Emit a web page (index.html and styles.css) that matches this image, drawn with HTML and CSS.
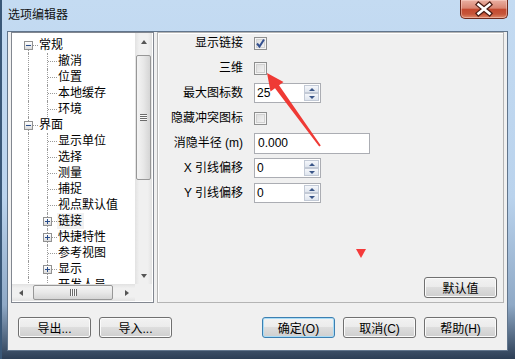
FILE: index.html
```html
<!DOCTYPE html>
<html>
<head>
  <title>选项编辑器</title>
  <link rel="stylesheet" href="styles.css">
</head>
<body>
  <div class="window">
    <div class="titlebar">
      <span class="title">选项编辑器</span>
      <div class="close">
        <svg width="46" height="18" viewBox="0 0 46 18">
          <path d="M17.5 4.5 L28.5 13.5 M28.5 4.5 L17.5 13.5" stroke="#4a1c14" stroke-width="5" stroke-linecap="square"/>
          <path d="M17.5 4.5 L28.5 13.5 M28.5 4.5 L17.5 13.5" stroke="#ffffff" stroke-width="2.6" stroke-linecap="square"/>
        </svg>
      </div>
    </div>

    <div class="client">
      <div class="panes">
        <div class="tree">
          <div class="tree-body">
            <div class="tree-list">
              <div class="node"><span class="cell top"><i class="box"></i></span><span class="label">常规</span></div>
              <div class="node"><span class="cell line"></span><span class="cell tee"></span><span class="label">撤消</span></div>
              <div class="node"><span class="cell line"></span><span class="cell tee"></span><span class="label">位置</span></div>
              <div class="node"><span class="cell line"></span><span class="cell tee"></span><span class="label">本地缓存</span></div>
              <div class="node"><span class="cell line"></span><span class="cell tee"></span><span class="label">环境</span></div>
              <div class="node"><span class="cell tee"><i class="box"></i></span><span class="label">界面</span></div>
              <div class="node"><span class="cell line"></span><span class="cell tee"></span><span class="label">显示单位</span></div>
              <div class="node"><span class="cell line"></span><span class="cell tee"></span><span class="label">选择</span></div>
              <div class="node"><span class="cell line"></span><span class="cell tee"></span><span class="label">测量</span></div>
              <div class="node"><span class="cell line"></span><span class="cell tee"></span><span class="label">捕捉</span></div>
              <div class="node"><span class="cell line"></span><span class="cell tee"></span><span class="label">视点默认值</span></div>
              <div class="node"><span class="cell line"></span><span class="cell tee"><i class="box plus"></i></span><span class="label hot">链接</span></div>
              <div class="node"><span class="cell line"></span><span class="cell tee"><i class="box plus"></i></span><span class="label">快捷特性</span></div>
              <div class="node"><span class="cell line"></span><span class="cell tee"></span><span class="label">参考视图</span></div>
              <div class="node"><span class="cell line"></span><span class="cell tee"><i class="box plus"></i></span><span class="label">显示</span></div>
              <div class="node"><span class="cell line"></span><span class="cell tee"></span><span class="label">开发人员</span></div>
            </div>
            <div class="vscroll">
              <div class="sb-btn"><i class="arr up"></i></div>
              <div class="vthumb"><i class="grip-h"></i></div>
              <div class="sb-track"></div>
              <div class="sb-btn"><i class="arr down"></i></div>
            </div>
          </div>
          <div class="tree-foot">
            <div class="hscroll">
              <div class="sb-btn"><i class="arr left"></i></div>
              <div class="hthumb"><i class="grip-v"></i></div>
              <div class="sb-track"></div>
              <div class="sb-btn"><i class="arr right"></i></div>
            </div>
            <div class="corner"></div>
          </div>
        </div>

        <div class="options">
          <div class="form">
            <label class="lbl">显示链接</label>
            <span class="check">
              <svg width="11" height="11" viewBox="0 0 11 11"><path d="M2 5.5 L4.5 8.5 L9 1.5" fill="none" stroke="#34508f" stroke-width="2"/></svg>
            </span>

            <label class="lbl">三维</label>
            <span class="check"></span>

            <label class="lbl">最大图标数</label>
            <div class="spin"><span class="spin-val">25</span><span class="spin-btns"><i class="sp up"></i><i class="sp down"></i></span></div>

            <label class="lbl">隐藏冲突图标</label>
            <span class="check"></span>

            <label class="lbl">消隐半径 (m)</label>
            <div class="field">0.000</div>

            <label class="lbl">X 引线偏移</label>
            <div class="spin"><span class="spin-val">0</span><span class="spin-btns"><i class="sp up"></i><i class="sp down"></i></span></div>

            <label class="lbl">Y 引线偏移</label>
            <div class="spin"><span class="spin-val">0</span><span class="spin-btns"><i class="sp up"></i><i class="sp down"></i></span></div>
          </div>
          <div class="options-foot">
            <button class="btn">默认值</button>
          </div>
        </div>
      </div>

      <div class="buttons">
        <div class="btn-group">
          <button class="btn">导出...</button>
          <button class="btn">导入...</button>
        </div>
        <div class="btn-group">
          <button class="btn default">确定(O)</button>
          <button class="btn">取消(C)</button>
          <button class="btn">帮助(H)</button>
        </div>
      </div>
    </div>

    <!-- red annotation marks drawn over the dialog -->
    <svg class="marks" width="515" height="359" viewBox="0 0 515 359">
      <polygon points="265,73 281.5,82.1 277,85.3 318.8,145.4 317.2,146.6 273,88.3 268.5,91.5" fill="#ef3a35"/>
      <polygon points="354,249 364,249 359,258" fill="#f53a3a"/>
    </svg>
  </div>
</body>
</html>
```

FILE: styles.css
```css
* {
  box-sizing: border-box;
}

body {
  margin: 0;
  width: 515px;
  height: 359px;
  overflow: hidden;
  background: #1d2b3c;
  font-family: "Liberation Sans", "Noto Sans CJK SC", sans-serif;
  font-size: 12px;
  color: #000;
}

.window {
  position: relative;
  width: 515px;
  height: 359px;
  display: flex;
  flex-direction: column;
  padding: 0 7px 8px 7px;
  background: linear-gradient(to bottom, #c4dbf2 0%, #bad3ed 55%, #8fa9c6 85%, #2c3e55 100%);
  border-left: 2px solid #3a5878;
}

.window {
  padding-left: 5px;
}

.titlebar {
  height: 31px;
  display: flex;
  justify-content: space-between;
  align-items: flex-start;
}

.title {
  padding: 7px 0 0 1px;
  line-height: 16px;
  font-size: 12px;
  color: #111;
}

.close {
  width: 48px;
  height: 19px;
  display: flex;
  align-items: center;
  justify-content: center;
  border: 1px solid #6e2a1e;
  border-top: none;
  border-radius: 0 0 5px 5px;
  background: linear-gradient(to bottom, #eab0a2 0%, #d98572 45%, #c44a30 52%, #c6553a 78%, #df8a6a 100%);
  box-shadow: inset 0 0 0 1px rgba(255, 220, 210, 0.45);
}

.client {
  height: 320px;
  display: flex;
  flex-direction: column;
  padding: 0 3px;
  background: #f0f0f0;
  border: 1px solid #61758c;
}

.panes {
  display: flex;
  gap: 3px;
  height: 271px;
}

/* tree */

.tree {
  width: 143px;
  display: flex;
  flex-direction: column;
  background: #fff;
  border: 1px solid #828790;
}

.tree-body {
  height: 251px;
  display: flex;
}

.tree-list {
  width: 123px;
  overflow: hidden;
  padding: 4px 0 0 7px;
}

.node {
  display: flex;
  height: 16px;
  white-space: nowrap;
}

.cell {
  position: relative;
  width: 19px;
  height: 16px;
  flex: none;
}

.cell.line::before,
.cell.tee::before,
.cell.top::before {
  content: "";
  position: absolute;
  left: 9px;
  top: 0;
  bottom: 0;
  border-left: 1px dotted #9a9a9a;
}

.cell.top::before {
  top: 8px;
}

.cell.tee::after,
.cell.top::after {
  content: "";
  position: absolute;
  left: 10px;
  top: 8px;
  width: 9px;
  border-top: 1px dotted #9a9a9a;
}

.box {
  position: absolute;
  left: 5px;
  top: 4px;
  width: 9px;
  height: 9px;
  z-index: 1;
  border: 1px solid #919191;
  background: linear-gradient(to bottom, #ffffff, #dcdcdc);
}

.box::before {
  content: "";
  position: absolute;
  left: 1px;
  top: 3px;
  width: 5px;
  height: 1px;
  background: #2a4d8a;
}

.box.plus::after {
  content: "";
  position: absolute;
  left: 3px;
  top: 1px;
  width: 1px;
  height: 5px;
  background: #2a4d8a;
}

.label {
  padding: 0 2px 0 1px;
  line-height: 16px;
}

.label.hot {
  background: #f1f1f1;
}

/* scrollbars */

.vscroll {
  width: 17px;
  display: flex;
  flex-direction: column;
  background: linear-gradient(to right, #e2e2e2, #f0f0f0 25%, #f0f0f0 75%, #e2e2e2);
}

.hscroll {
  width: 123px;
  height: 17px;
  display: flex;
  background: linear-gradient(to bottom, #e2e2e2, #f0f0f0 25%, #f0f0f0 75%, #e2e2e2);
}

.sb-btn {
  width: 17px;
  height: 17px;
  flex: none;
  display: flex;
  align-items: center;
  justify-content: center;
}

.sb-track {
  flex: 1;
}

.arr {
  width: 0;
  height: 0;
  border: 3px solid transparent;
}

.arr.up {
  border-bottom: 4px solid #555;
  border-top-width: 0;
}

.arr.down {
  border-top: 4px solid #555;
  border-bottom-width: 0;
}

.arr.left {
  border-right: 4px solid #555;
  border-left-width: 0;
}

.arr.right {
  border-left: 4px solid #555;
  border-right-width: 0;
}

.vthumb {
  height: 125px;
  margin: 5px 1px 0 1px;
  display: flex;
  align-items: center;
  justify-content: center;
  border: 1px solid #979797;
  border-radius: 2px;
  background: linear-gradient(to right, #f4f4f4, #e8e8e8 50%, #d5d5d5);
}

.hthumb {
  width: 80px;
  margin: 1px 0 1px 4px;
  display: flex;
  align-items: center;
  justify-content: center;
  border: 1px solid #979797;
  border-radius: 2px;
  background: linear-gradient(to bottom, #f4f4f4, #e8e8e8 50%, #d5d5d5);
}

.grip-h {
  width: 7px;
  height: 7px;
  background: repeating-linear-gradient(to bottom, #6b6b6b 0 1px, #fafafa 1px 2px);
}

.grip-v {
  width: 7px;
  height: 7px;
  background: repeating-linear-gradient(to right, #6b6b6b 0 1px, #fafafa 1px 2px);
}

.tree-foot {
  display: flex;
}

.corner {
  width: 17px;
  height: 17px;
  background: #f0f0f0;
}

/* options */

.options {
  flex: 1;
  display: flex;
  flex-direction: column;
  border: 1px solid #b4b4b4;
  box-shadow: inset 1px 1px 0 #fff;
}

.form {
  display: grid;
  grid-template-columns: 86px auto;
  grid-auto-rows: 20px;
  column-gap: 10px;
  row-gap: 5px;
  align-items: center;
  justify-items: start;
}

.lbl {
  justify-self: end;
  padding-right: 1px;
  line-height: 16px;
  white-space: nowrap;
}

.check {
  width: 13px;
  height: 13px;
  display: flex;
  align-items: center;
  justify-content: center;
  border: 1px solid #8e8f8f;
  background: linear-gradient(135deg, #d9d9d9, #f7f7f7);
  box-shadow: inset 0 0 0 1px #f4f4f4, inset 0 0 0 2px #d2d2d2;
}

.spin {
  width: 67px;
  height: 20px;
  display: flex;
  justify-content: space-between;
  border: 1px solid #abadb3;
  background: #fff;
}

.spin-val {
  padding-left: 2px;
  line-height: 18px;
}

.spin-btns {
  width: 15px;
  margin: 1px 1px 1px 0;
  display: flex;
  flex-direction: column;
}

.sp {
  flex: 1;
  display: flex;
  align-items: center;
  justify-content: center;
  border: 1px solid #c3cad6;
  background: linear-gradient(to bottom, #f5f7fb, #dfe5ee);
}

.sp::before {
  content: "";
  border: 3px solid transparent;
}

.sp.up::before {
  border-bottom: 3px solid #3b5688;
  border-top-width: 0;
}

.sp.down::before {
  border-top: 3px solid #3b5688;
  border-bottom-width: 0;
}

.field {
  width: 116px;
  height: 21px;
  padding-left: 3px;
  line-height: 19px;
  border: 1px solid #abadb3;
  background: #fff;
}

.options-foot {
  margin-top: auto;
  display: flex;
  justify-content: flex-end;
  padding: 0 6px 4px 0;
}

/* buttons */

.btn {
  width: 73px;
  height: 21px;
  padding: 0;
  font: inherit;
  color: #000;
  border: 1px solid #707070;
  border-radius: 3px;
  background: linear-gradient(to bottom, #f2f2f2 0%, #ebebeb 50%, #dddddd 50%, #cfcfcf 100%);
  box-shadow: inset 0 0 0 1px #fbfbfb;
}

.btn.default {
  border-color: #3c7fb1;
  box-shadow: inset 0 0 0 1px #a9dcf6;
}

.buttons {
  margin: 14px -3px 0 -3px;
  padding: 0 10px;
  display: flex;
  justify-content: space-between;
}

.btn-group {
  display: flex;
  gap: 8px;
}

.marks {
  position: absolute;
  left: 0;
  top: 0;
  pointer-events: none;
}
```
